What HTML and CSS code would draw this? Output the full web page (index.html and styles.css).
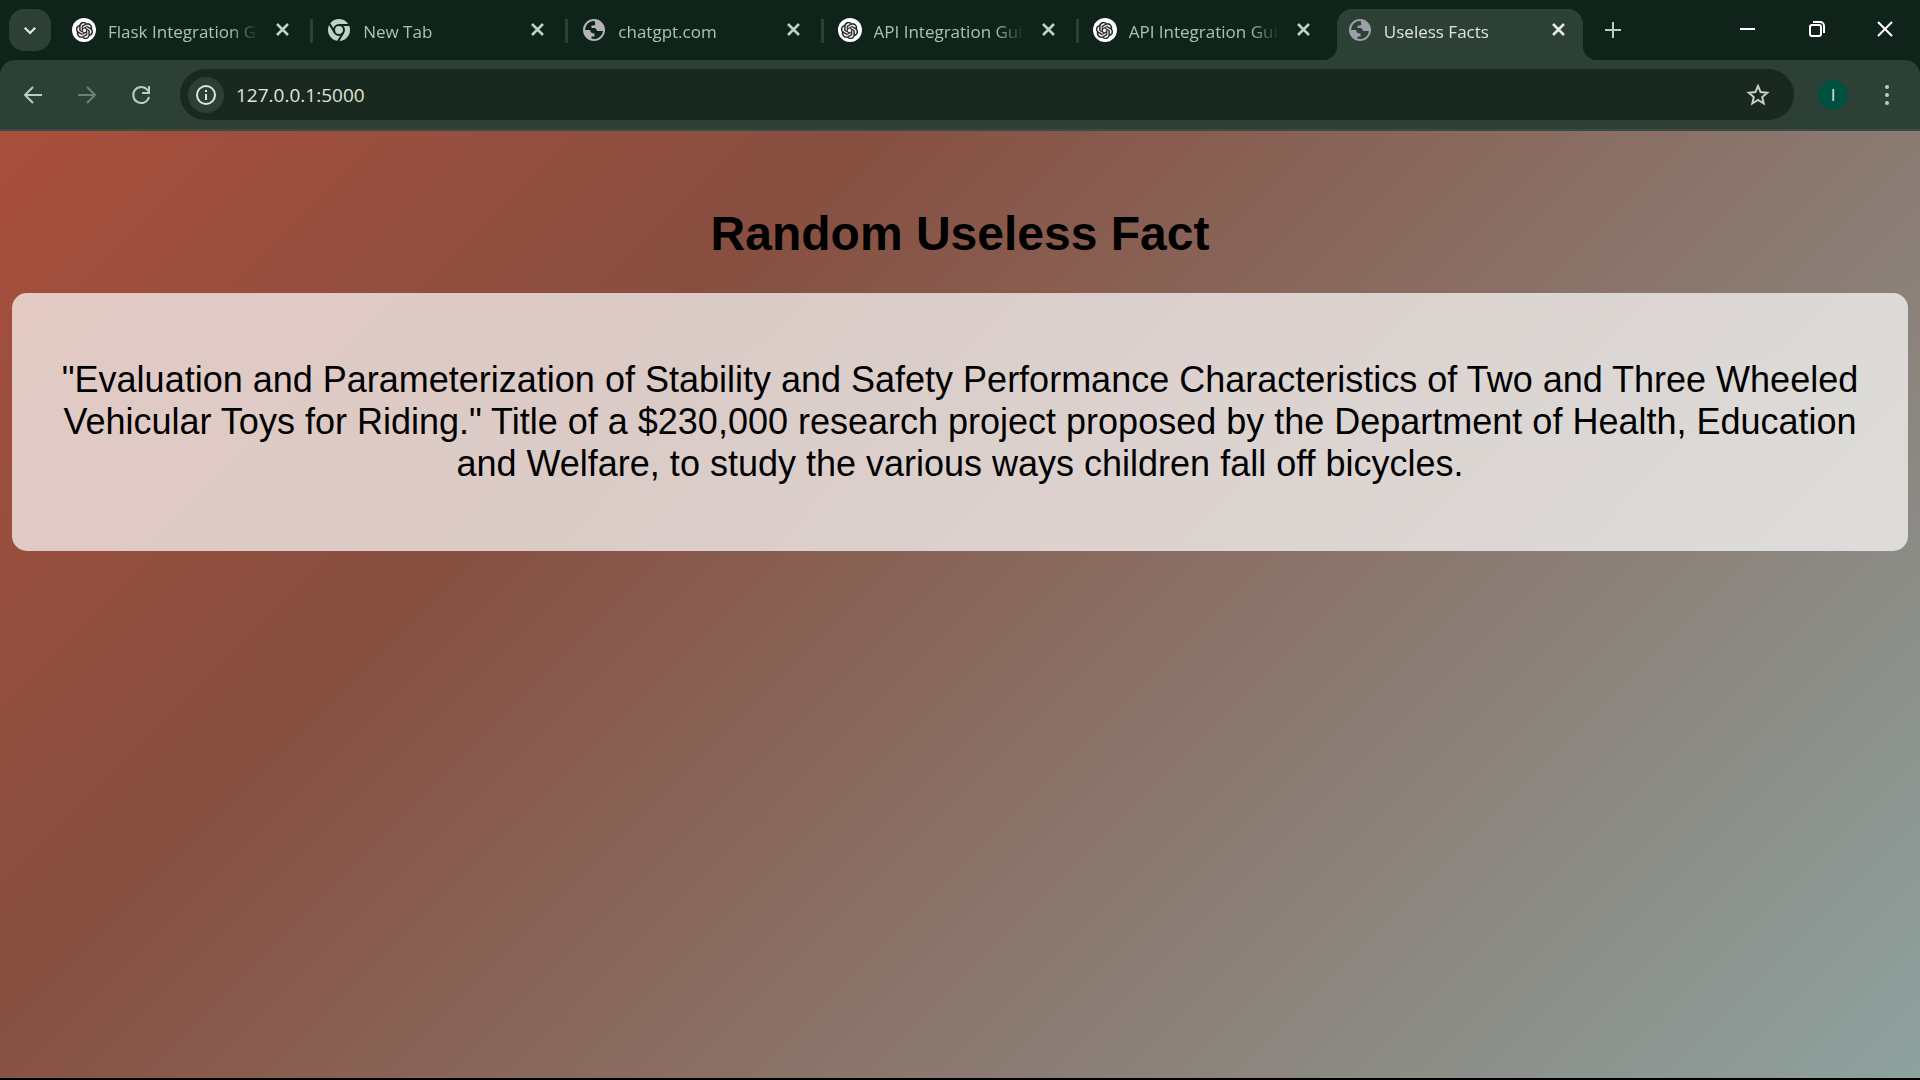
FILE: index.html
```html
<!DOCTYPE html>
<html lang="en">
<head>
<meta charset="utf-8">
<title>Useless Facts</title>
<link rel="stylesheet" href="styles.css">
</head>
<body>
<svg class="sprite" aria-hidden="true">
  <symbol id="knot" viewBox="0 0 24 24"><path d="M22.2819 9.8211a5.9847 5.9847 0 0 0-.5157-4.9108 6.0462 6.0462 0 0 0-6.5098-2.9A6.0651 6.0651 0 0 0 4.9807 4.1818a5.9847 5.9847 0 0 0-3.9977 2.9 6.0462 6.0462 0 0 0 .7427 7.0966 5.98 5.98 0 0 0 .511 4.9107 6.051 6.051 0 0 0 6.5146 2.9001A5.9847 5.9847 0 0 0 13.2599 24a6.0557 6.0557 0 0 0 5.7718-4.2058 5.9894 5.9894 0 0 0 3.9977-2.9001 6.0557 6.0557 0 0 0-.7475-7.0729zm-9.022 12.6081a4.4755 4.4755 0 0 1-2.8764-1.0408l.1419-.0804 4.7783-2.7582a.7948.7948 0 0 0 .3927-.6813v-6.7369l2.02 1.1686a.071.071 0 0 1 .038.052v5.5826a4.504 4.504 0 0 1-4.4945 4.4944zm-9.6607-4.1254a4.4708 4.4708 0 0 1-.5346-3.0137l.142.0852 4.783 2.7582a.7712.7712 0 0 0 .7806 0l5.8428-3.3685v2.3324a.0804.0804 0 0 1-.0332.0615L9.74 19.9502a4.4992 4.4992 0 0 1-6.1408-1.6464zM2.3408 7.8956a4.485 4.485 0 0 1 2.3655-1.9728V11.6a.7664.7664 0 0 0 .3879.6765l5.8144 3.3543-2.0201 1.1685a.0757.0757 0 0 1-.071 0l-4.8303-2.7865A4.504 4.504 0 0 1 2.3408 7.872zm16.5963 3.8558L13.1038 8.364 15.1192 7.2a.0757.0757 0 0 1 .071 0l4.8303 2.7913a4.4944 4.4944 0 0 1-.6765 8.1042v-5.6772a.79.79 0 0 0-.407-.667zm2.0107-3.0231l-.142-.0852-4.7735-2.7818a.7759.7759 0 0 0-.7854 0L9.409 9.2297V6.8974a.0662.0662 0 0 1 .0284-.0615l4.8303-2.7866a4.4992 4.4992 0 0 1 6.6802 4.66zM8.3065 12.863l-2.02-1.1638a.0804.0804 0 0 1-.038-.0567V6.0742a4.4992 4.4992 0 0 1 7.3757-3.4537l-.142.0805L8.704 5.459a.7948.7948 0 0 0-.3927.6813zm1.0976-2.3654l2.602-1.4998 2.6069 1.4998v2.9994l-2.5974 1.4997-2.6067-1.4997Z" stroke="currentColor" stroke-width=".5"/></symbol>
  <symbol id="globe" viewBox="0 0 24 24"><path fill-rule="evenodd" d="M12 1a11 11 0 1 0 0 22a11 11 0 1 0 0-22ZM13 3.100C12 5 14.500 6 12.500 7.500H9.500V10H13C14.500 10 14 13 16 13H20.900A9 9 0 0 1 9.500 20.600V18.500H12.500V15.500C9.500 15.500 8.500 14.500 8 12H3A9 9 0 0 1 13 3.100Z"/></symbol>
  <symbol id="browser" viewBox="0 0 24 24"><circle cx="12" cy="12" r="11"/><g fill="none" stroke="#10231a" stroke-width="2"><circle cx="12" cy="12" r="5"/><path d="M12 7H22M7.700 14.500L2.700 6M16.300 14.500L11 23.500"/></g></symbol>
  <symbol id="cross" viewBox="0 0 24 24"><path d="M6 6L17 17M17 6L6 17" fill="none" stroke="currentColor" stroke-width="2.500"/></symbol>
</svg>
<div class="window">
  <header class="tabstrip">
    <button class="tab-search" aria-label="Search tabs"><svg viewBox="0 0 24 24"><path d="M5 9L12 16L19 9" fill="none" stroke="currentColor" stroke-width="3"/></svg></button>
    <nav class="tabs" aria-label="Tabs">
      <div class="tab"><span class="favicon round"><svg><use href="#knot"/></svg></span><a class="title" href="#">Flask Integration Guide</a><button class="close" aria-label="Close tab"><svg><use href="#cross"/></svg></button></div>
      <div class="tab"><span class="favicon mint"><svg><use href="#browser"/></svg></span><a class="title" href="#">New Tab</a><button class="close" aria-label="Close tab"><svg><use href="#cross"/></svg></button></div>
      <div class="tab"><span class="favicon"><svg><use href="#globe"/></svg></span><a class="title" href="#">chatgpt.com</a><button class="close" aria-label="Close tab"><svg><use href="#cross"/></svg></button></div>
      <div class="tab"><span class="favicon round"><svg><use href="#knot"/></svg></span><a class="title" href="#">API Integration Guide</a><button class="close" aria-label="Close tab"><svg><use href="#cross"/></svg></button></div>
      <div class="tab"><span class="favicon round"><svg><use href="#knot"/></svg></span><a class="title" href="#">API Integration Guide</a><button class="close" aria-label="Close tab"><svg><use href="#cross"/></svg></button></div>
      <div class="tab active"><span class="favicon"><svg><use href="#globe"/></svg></span><a class="title" href="#">Useless Facts</a><button class="close" aria-label="Close tab"><svg><use href="#cross"/></svg></button></div>
    </nav>
    <button class="new-tab" aria-label="New tab"><svg viewBox="0 0 24 24"><path d="M12 4V20M4 12H20" fill="none" stroke="currentColor" stroke-width="2"/></svg></button>
    <div class="controls">
      <button aria-label="Minimize"><svg viewBox="0 0 24 24"><path d="M4 12H19" fill="none" stroke="currentColor" stroke-width="2"/></svg></button>
      <button aria-label="Restore"><svg viewBox="0 0 24 24"><g fill="none" stroke="currentColor" stroke-width="2"><rect x="5" y="8" width="11" height="11" rx="2"/><path d="M8 5H15A4 4 0 0 1 19 9V16"/></g></svg></button>
      <button aria-label="Close"><svg viewBox="0 0 24 24"><path d="M4 5L18 19M18 5L4 19" fill="none" stroke="currentColor" stroke-width="2"/></svg></button>
    </div>
  </header>
  <div class="toolbar">
    <button class="tool" aria-label="Back"><svg viewBox="0 0 24 24"><path d="M21 12H4M12 4L4 12L12 20" fill="none" stroke="currentColor" stroke-width="2"/></svg></button>
    <button class="tool" aria-label="Forward" disabled><svg viewBox="0 0 24 24"><path d="M3 12H20M12 4L20 12L12 20" fill="none" stroke="currentColor" stroke-width="2"/></svg></button>
    <button class="tool" aria-label="Reload"><svg viewBox="0 0 24 24"><path d="M20 14A8 8 0 1 1 18.500 7L20 9M20 3V10H13" fill="none" stroke="currentColor" stroke-width="2"/></svg></button>
    <div class="omnibox">
      <button class="info" aria-label="View site information"><svg viewBox="0 0 24 24"><circle cx="12" cy="12" r="9" fill="none" stroke="currentColor" stroke-width="2"/><path d="M12 11V17M12 7V9" stroke="currentColor" stroke-width="2"/></svg></button>
      <input class="url" type="text" aria-label="Address" value="127.0.0.1:5000">
      <button class="star" aria-label="Bookmark this tab"><svg viewBox="0 0 24 24"><path d="M12 3L14.600 9.100L21.200 9.700L16.200 14L17.700 20.500L12 17L6.300 20.500L7.800 14L2.800 9.700L9.400 9.100Z" fill="none" stroke="currentColor" stroke-width="2"/></svg></button>
    </div>
    <button class="avatar" aria-label="Profile">I</button>
    <button class="menu" aria-label="Menu"><svg viewBox="0 0 24 24"><circle cx="12" cy="4" r="2"/><circle cx="12" cy="12" r="2"/><circle cx="12" cy="20" r="2"/></svg></button>
  </div>
  <main class="page">
    <h1>Random Useless Fact</h1>
    <section class="fact"><p>"Evaluation and Parameterization of Stability and Safety Performance Characteristics of Two and Three Wheeled Vehicular Toys for Riding." Title of a $230,000 research project proposed by the Department of Health, Education and Welfare, to study the various ways children fall off bicycles.</p></section>
  </main>
</div>
</body>
</html>
```
FILE: styles.css
```css
* { box-sizing: border-box; }
body { margin: 0; background: #10231a; font-family: "Open Sans", "Noto Sans", sans-serif; }
.sprite { display: none; }
svg { display: block; width: 24px; height: 24px; fill: currentColor; }
button { display: flex; align-items: center; justify-content: center; flex: none; padding: 0; border: 0; background: none; color: #b7d0bd; font: inherit; }

.window { display: flex; flex-direction: column; min-height: 100vh; border-bottom: 2px solid #000; }

.tabstrip { display: flex; height: 60px; padding-left: 9px; }
.tab-search { width: 42px; height: 42px; margin-top: 9px; border-radius: 15px; background: #2d4035; color: #dfe9df; }
.tab-search svg { width: 18px; height: 18px; }
.tabs { display: flex; flex: 0 1 1522px; min-width: 0; gap: 9px; margin: 9px 0 0 10px; }
.tab { position: relative; display: flex; flex: 1 1 0; min-width: 0; align-items: center; padding: 0 12px 9px 11px; color: #a9c3b0; }
.tab + .tab:not(.active)::before { content: ""; position: absolute; left: -6px; top: 10px; width: 3px; height: 24px; background: #2d4035; }
.tab.active { border-radius: 15px 15px 0 0; background: #2d4035; color: #dfe5dc; }
.tab.active::before, .tab.active::after { content: ""; position: absolute; bottom: 0; width: 15px; height: 15px; }
.tab.active::before { right: 100%; background: radial-gradient(circle at 0 0, transparent 15px, #2d4035 16px); }
.tab.active::after { left: 100%; background: radial-gradient(circle at 100% 0, transparent 15px, #2d4035 16px); }
.favicon { display: flex; flex: none; align-items: center; justify-content: center; width: 24px; height: 24px; color: #b5b5b5; }
.active .favicon { color: #9a9fa9; }
.favicon.mint { color: #bdd3c3; }
.favicon.round { border-radius: 50%; background: #fff; color: #1b1b1b; }
.round svg { width: 17px; height: 17px; }
.title { flex: 1; min-width: 0; margin: 3px 12px 0 12px; overflow: hidden; white-space: nowrap; font-size: 17px; line-height: 24px; color: inherit; text-decoration: none; mask-image: linear-gradient(to right, #000 calc(100% - 30px), transparent); }
.close { width: 24px; height: 24px; color: #bdd6c3; }
.active .close { color: #e6ece4; }
.new-tab { width: 42px; height: 42px; margin: 9px 0 0 9px; }
.controls { display: flex; margin-left: auto; }
.controls button { width: 69px; height: 58px; color: #fff; }

.toolbar { display: flex; align-items: center; height: 71px; padding: 0 12px 2px 12px; border-radius: 15px 15px 0 0; background: #2d4035; box-shadow: inset 0 -2px #3c4b41; }
.tool { width: 42px; height: 42px; margin-right: 12px; }
.tool:disabled { color: #6c8073; }
.omnibox { display: flex; flex: 1; min-width: 0; align-items: center; height: 51px; margin: 0 24px 0 6px; padding: 0 24px 0 8px; border-radius: 26px; background: #19291f; }
.info { width: 36px; height: 36px; border-radius: 50%; background: #2d4035; color: #dfe5dc; }
.url { flex: 1; min-width: 0; padding: 0; border: 0; margin-left: 12px; background: none; color: #dfe5dc; font: 19px/28px "Open Sans", "Noto Sans", sans-serif; outline: 0; }
.star { color: #c6d0c5; }
.avatar { width: 30px; height: 30px; border-radius: 50%; background: #005040; color: #dfe9df; font-size: 17px; line-height: 24px; }
.menu { width: 42px; height: 42px; margin-left: 18px; }

.page { flex: 1; padding: 44px 12px 30px; background: linear-gradient(135deg, #a94e3c 0%, #874f40 30%, #8ea29f 100%); font-family: "Liberation Sans", Arial, sans-serif; color: #000; text-align: center; }
h1 { margin: 32px 0; font-size: 48px; line-height: 54px; }
.fact { padding: 30px 48px; border-radius: 15px; background: rgba(255, 255, 255, .7); }
.fact p { margin: 36px 0; font-size: 36px; line-height: 42px; }
```
